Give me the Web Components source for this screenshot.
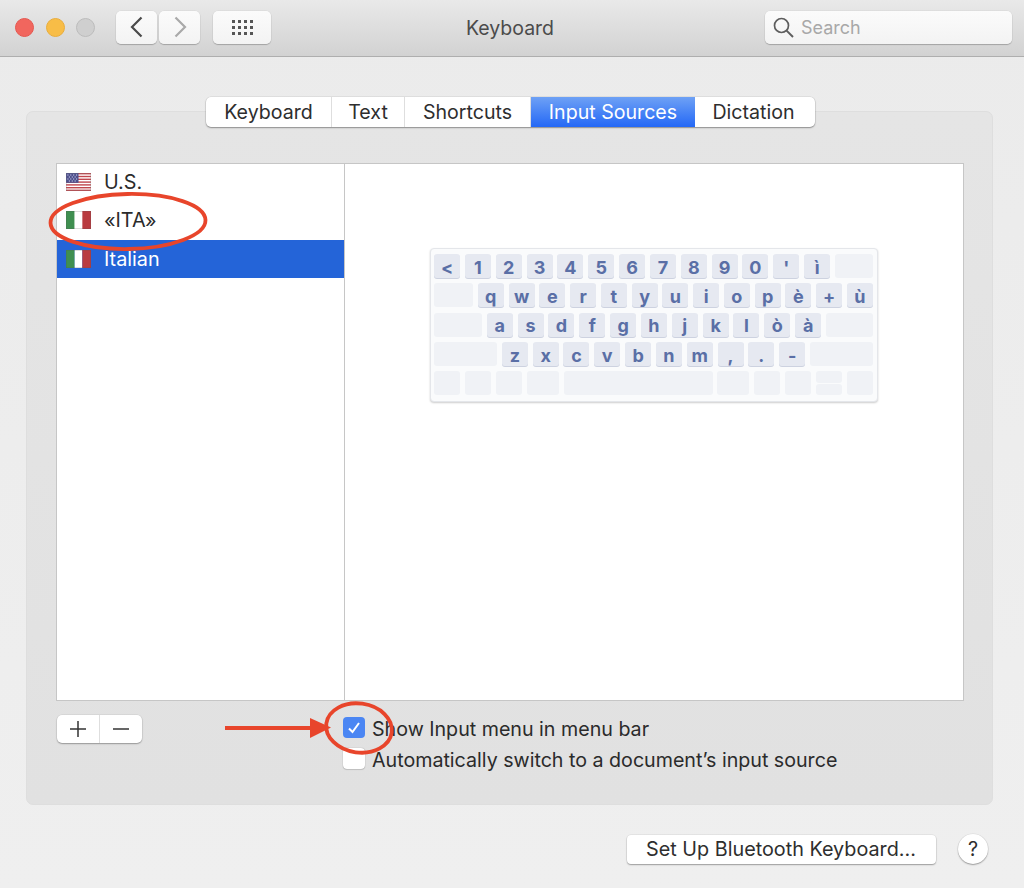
<!DOCTYPE html>
<html lang="en">
<head>
<meta charset="utf-8">
<title>Keyboard</title>
<style>
  html, body { margin: 0; padding: 0; }
  body {
    width: 1024px;
    height: 888px;
    overflow: hidden;
    position: relative;
    background: linear-gradient(#ebebeb, #efefef);
    font-family: Inter, "Liberation Sans", sans-serif;
    color: #2b2b2b;
  }
</style>
</head>
<body>
<mac-titlebar title="Keyboard"></mac-titlebar>

<mac-panel>
  <mac-tabs slot="tabs" active="Input Sources" items="Keyboard:126,Text:73,Shortcuts:126,Input Sources:164,Dictation:120"></mac-tabs>
  <source-pane></source-pane>
  <bottom-controls></bottom-controls>
</mac-panel>

<mac-footer></mac-footer>
<mark-up></mark-up>

<script>
const US_FLAG = `<svg width="25" height="18" viewBox="0 0 26 18" preserveAspectRatio="none">
  <rect width="26" height="18" fill="#fff"/>
  <g fill="#c0474e">
    <rect y="0" width="26" height="1.4"/><rect y="2.8" width="26" height="1.4"/>
    <rect y="5.6" width="26" height="1.4"/><rect y="8.4" width="26" height="1.4"/>
    <rect y="11.2" width="26" height="1.4"/><rect y="14" width="26" height="1.4"/>
    <rect y="16.6" width="26" height="1.4"/>
  </g>
  <rect width="13" height="9.8" fill="#4d4f8c"/>
  <g fill="#b9bbdb">
    <circle cx="2" cy="2" r=".7"/><circle cx="5" cy="2" r=".7"/><circle cx="8" cy="2" r=".7"/><circle cx="11" cy="2" r=".7"/>
    <circle cx="3.5" cy="4" r=".7"/><circle cx="6.5" cy="4" r=".7"/><circle cx="9.5" cy="4" r=".7"/>
    <circle cx="2" cy="6" r=".7"/><circle cx="5" cy="6" r=".7"/><circle cx="8" cy="6" r=".7"/><circle cx="11" cy="6" r=".7"/>
    <circle cx="3.5" cy="8" r=".7"/><circle cx="6.5" cy="8" r=".7"/><circle cx="9.5" cy="8" r=".7"/>
  </g>
  <rect x=".25" y=".25" width="25.5" height="17.5" fill="none" stroke="#777" stroke-opacity=".45" stroke-width=".5"/>
</svg>`;

const IT_FLAG = `<svg width="25" height="18" viewBox="0 0 26 18" preserveAspectRatio="none">
  <rect width="9" height="18" fill="#3f8f50"/>
  <rect x="9" width="8" height="18" fill="#fff"/>
  <rect x="17" width="9" height="18" fill="#b93b40"/>
  <rect x=".25" y=".25" width="25.5" height="17.5" fill="none" stroke="#555" stroke-opacity=".4" stroke-width=".5"/>
</svg>`;

class MacTitlebar extends HTMLElement {
  connectedCallback() {
    const shadow = this.attachShadow({ mode: "open" });
    const dots = Array.from({ length: 12 }, () => "<i></i>").join("");
    shadow.innerHTML = `
      <style>
        :host {
          display: flex;
          align-items: center;
          box-sizing: border-box;
          height: 57px;
          padding: 0 12px 2px 15px;
          background: linear-gradient(#e9e9e9, #d2d2d2);
          border-bottom: 1px solid #aeaeae;
          position: relative;
        }
        .lights { display: flex; gap: 11.5px; margin-right: 21px; }
        .light { width: 19px; height: 19px; border-radius: 50%; box-sizing: border-box; }
        .red { background: #f1665e; border: 1px solid #e5574f; }
        .yellow { background: #f8bd47; border: 1px solid #e9ad3c; }
        .grey { background: #cfcfcf; border: 1px solid #bcbcbc; }
        .btn {
          display: flex;
          align-items: center;
          justify-content: center;
          box-sizing: border-box;
          height: 33px;
          background: linear-gradient(#fbfbfb, #f3f3f3);
          border-radius: 5px;
          box-shadow: 0 1px 1px rgba(0,0,0,.22), 0 0 0 .5px rgba(0,0,0,.06);
        }
        .nav { width: 41px; }
        .nav + .nav { margin-left: 2px; }
        .apps { width: 58px; margin-left: 13px; }
        .grid { display: grid; grid-template-columns: repeat(4, 3px); gap: 3px; }
        .grid i { width: 3px; height: 3px; background: #555; display: block; }
        .title {
          position: absolute;
          left: 0; right: 0; top: 0; bottom: 0;
          display: flex;
          align-items: center;
          justify-content: center;
          font-size: 19.5px;
          color: #4b4b4b;
          pointer-events: none;
          transform: translateX(-2px);
        }
        .search {
          margin-left: auto;
          width: 247px;
          justify-content: flex-start;
          padding-left: 7px;
          gap: 6px;
          position: relative;
          z-index: 1;
          color: #a8a8a8;
          font-size: 18px;
        }
      </style>
      <div class="lights">
        <div class="light red"></div><div class="light yellow"></div><div class="light grey"></div>
      </div>
      <div class="btn nav"><svg width="16" height="24" viewBox="0 0 16 24"><path d="M12.5 2.5 3 12l9.5 9.5" fill="none" stroke="#4a4a4a" stroke-width="2.2"/></svg></div>
      <div class="btn nav"><svg width="16" height="24" viewBox="0 0 16 24"><path d="M3.5 2.5 13 12l-9.5 9.5" fill="none" stroke="#a9a9a9" stroke-width="2.2"/></svg></div>
      <div class="btn apps"><div class="grid">${dots}</div></div>
      <div class="title">${this.getAttribute("title")}</div>
      <div class="btn search">
        <svg width="23" height="23" viewBox="0 0 23 23"><circle cx="9.5" cy="9.5" r="7" fill="none" stroke="#5d5d5d" stroke-width="1.7"/><path d="M14.6 14.6 21 21" stroke="#5d5d5d" stroke-width="2"/></svg>
        <span>Search</span>
      </div>
    `;
  }
}

class MacPanel extends HTMLElement {
  connectedCallback() {
    this.attachShadow({ mode: "open" }).innerHTML = `
      <style>
        :host {
          display: flex;
          flex-direction: column;
          box-sizing: border-box;
          width: 967px;
          height: 694px;
          margin: 54px 0 0 26px;
          padding: 0 29px 0 29px;
          background: linear-gradient(#e5e5e5, #e1e1e1);
          border: 1px solid #dedede;
          border-radius: 7px;
        }
        .tabs { display: flex; justify-content: center; margin: -15px 0 36px; padding-left: 2px; }
      </style>
      <div class="tabs"><slot name="tabs"></slot></div>
      <slot></slot>
    `;
  }
}

class MacTabs extends HTMLElement {
  connectedCallback() {
    const active = this.getAttribute("active");
    const items = this.getAttribute("items").split(",").map(s => s.split(":"));
    const tabs = items.map(([label, w]) =>
      `<div class="tab ${label === active ? "on" : ""}" style="width:${w}px">${label}</div>`).join("");
    this.attachShadow({ mode: "open" }).innerHTML = `
      <style>
        :host {
          display: flex;
          height: 30px;
          border-radius: 5px;
          overflow: hidden;
          background: #fff;
          box-shadow: 0 1px 1.5px rgba(0,0,0,.35), 0 0 0 .5px rgba(0,0,0,.1);
          font-size: 19.6px;
          color: #2e2e2e;
        }
        .tab {
          display: flex;
          align-items: center;
          justify-content: center;
          box-sizing: border-box;
          border-right: 1px solid #dedede;
        }
        .tab:last-child { border-right: 0; padding-right: 3px; }
        .on {
          color: #fff;
          border-right: 0;
          background: linear-gradient(#6ea1f5, #2468f6);
        }
      </style>
      ${tabs}
    `;
  }
}

class SourcePane extends HTMLElement {
  connectedCallback() {
    this.attachShadow({ mode: "open" }).innerHTML = `
      <style>
        :host {
          display: flex;
          box-sizing: border-box;
          width: 908px;
          height: 538px;
          background: #fff;
          border: 1px solid #c6c6c6;
        }
        .list {
          width: 288px;
          box-sizing: border-box;
          flex: none;
          border-right: 1px solid #c6c6c6;
          overflow: hidden;
        }
        .rows { margin-top: -1px; }
        .detail { flex: 1; display: flex; justify-content: center; padding: 84px 0 0 0; }
      </style>
      <div class="list"><div class="rows">
        <source-row label="U.S.">${US_FLAG}</source-row>
        <source-row label="«ITA»">${IT_FLAG}</source-row>
        <source-row label="Italian" selected>${IT_FLAG}</source-row>
      </div></div>
      <div class="detail"><key-board></key-board></div>
    `;
  }
}

class SourceRow extends HTMLElement {
  connectedCallback() {
    const on = this.hasAttribute("selected");
    this.attachShadow({ mode: "open" }).innerHTML = `
      <style>
        :host {
          display: flex;
          align-items: center;
          box-sizing: border-box;
          height: 38.3px;
          padding-left: 9px;
          gap: 13px;
          font-size: 19.8px;
          color: ${on ? "#fff" : "#2b2b2b"};
          background: ${on ? "#2464d8" : "transparent"};
        }
        slot { display: flex; }
      </style>
      <slot></slot><span>${this.getAttribute("label")}</span>
    `;
  }
}

const KEY_ROWS = [
  [..."<1234567890'ì".split("").map(k => [k, 26]), ["", 38]],
  [["", 39], ..."qwertyuiopè+ù".split("").map(k => [k, 26])],
  [["", 48], ..."asdfghjklòà".split("").map(k => [k, 26]), ["", 47]],
  [["", 63], ..."zxcvbnm,.-".split("").map(k => [k, 26]), ["", 63]],
  [["", 26], ["", 26], ["", 26], ["", 32], ["", 149], ["", 32], ["", 26], ["", 26], ["arrows", 26], ["", 26]],
];

class KeyBoard extends HTMLElement {
  connectedCallback() {
    const rows = KEY_ROWS.map(row => `<div class="row">${row.map(([k, w]) => {
      if (k === "arrows") return `<div class="split" style="width:${w}px"><b></b><b></b></div>`;
      return `<div class="${k ? "key" : "blank"}" style="width:${w}px">${k}</div>`;
    }).join("")}</div>`).join("");
    this.attachShadow({ mode: "open" }).innerHTML = `
      <style>
        :host {
          display: flex;
          flex-direction: column;
          gap: 5.35px;
          box-sizing: border-box;
          width: 448px;
          height: 154px;
          padding: 5px 4px 0 3px;
          background: #fafbfc;
          border: 1px solid #e4e6ea;
          border-radius: 4px;
          box-shadow: 0 1px 2px rgba(0,0,0,.2);
        }
        .row { display: flex; justify-content: space-between; height: 24px; }
        .key, .blank, .split b { border-radius: 3px; box-sizing: border-box; }
        .key {
          display: flex;
          align-items: center;
          justify-content: center;
          padding-top: 2px;
          background: #e6e9f1;
          box-shadow: 0 1px 0 #cdd2e0;
          color: #5a6fa6;
          font: 700 18px Inter, "Liberation Sans", sans-serif;
        }
        .blank { background: #f0f2f6; }
        .split { display: flex; flex-direction: column; gap: 1px; }
        .split b { flex: 1; background: #f0f2f6; display: block; }
      </style>
      ${rows}
    `;
  }
}

class MacCheck extends HTMLElement {
  connectedCallback() {
    const on = this.hasAttribute("checked");
    this.attachShadow({ mode: "open" }).innerHTML = `
      <style>
        :host { display: flex; align-items: center; gap: 7px; height: 21px; font-size: 19.65px; color: #2b2b2b; white-space: nowrap; }
        .box {
          width: 22px; height: 21px; flex: none; border-radius: 4px;
          display: flex; align-items: center; justify-content: center;
          background: ${on ? "#4b86f3" : "#fff"};
          box-shadow: ${on ? "none" : "0 0 1px rgba(0,0,0,.4), 0 1px 1px rgba(0,0,0,.12)"};
        }
        span { margin-top: 3px; }
      </style>
      <div class="box">${on ? `<svg width="14" height="13" viewBox="0 0 14 13"><path d="M2 7.5 5.5 11 12 2" fill="none" stroke="#fff" stroke-width="2"/></svg>` : ""}</div>
      <span>${this.getAttribute("label")}</span>
    `;
  }
}

class BottomControls extends HTMLElement {
  connectedCallback() {
    this.attachShadow({ mode: "open" }).innerHTML = `
      <style>
        :host { display: flex; align-items: flex-start; padding: 14px 0 0 1px; }
        .addrem {
          display: flex;
          width: 85px;
          height: 28px;
          margin-right: 201px;
          background: #fff;
          border-radius: 5px;
          box-shadow: 0 1px 1.5px rgba(0,0,0,.3), 0 0 0 .5px rgba(0,0,0,.08);
        }
        .addrem div { flex: 1; display: flex; align-items: center; justify-content: center; }
        .addrem div + div { border-left: 1px solid #dedede; }
        .checks { display: flex; flex-direction: column; gap: 10px; padding-top: 2px; }
      </style>
      <div class="addrem">
        <div><svg width="18" height="18" viewBox="0 0 18 18"><path d="M9 1v16M1 9h16" stroke="#333" stroke-width="1.5"/></svg></div>
        <div><svg width="18" height="18" viewBox="0 0 18 18"><path d="M1 9h16" stroke="#333" stroke-width="1.5"/></svg></div>
      </div>
      <div class="checks">
        <mac-check checked label="Show Input menu in menu bar"></mac-check>
        <mac-check label="Automatically switch to a document’s input source"></mac-check>
      </div>
    `;
  }
}

class MacFooter extends HTMLElement {
  connectedCallback() {
    this.attachShadow({ mode: "open" }).innerHTML = `
      <style>
        :host {
          display: flex;
          align-items: center;
          justify-content: flex-end;
          gap: 22px;
          margin-top: 29px;
          padding-right: 36px;
          font-size: 19.8px;
          color: #2e2e2e;
        }
        .btn {
          width: 309px;
          height: 29px;
          box-sizing: border-box;
          padding-right: 1px;
          display: flex;
          align-items: center;
          justify-content: center;
          background: #fff;
          border-radius: 4px;
          box-shadow: 0 1px 1.5px rgba(0,0,0,.32), 0 0 0 .5px rgba(0,0,0,.08);
        }
        .help {
          width: 30px;
          height: 30px;
          border-radius: 50%;
          display: flex;
          align-items: center;
          justify-content: center;
          background: #fff;
          box-shadow: 0 1px 1.5px rgba(0,0,0,.32), 0 0 0 .5px rgba(0,0,0,.08);
        }
      </style>
      <div class="btn">Set Up Bluetooth Keyboard...</div>
      <div class="help">?</div>
    `;
  }
}

// hand drawn annotations that lie over the window
class MarkUp extends HTMLElement {
  connectedCallback() {
    this.attachShadow({ mode: "open" }).innerHTML = `
      <style>
        :host { position: absolute; left: 0; top: 0; width: 1024px; height: 888px; pointer-events: none; }
        svg { display: block; }
      </style>
      <svg width="1024" height="888" viewBox="0 0 1024 888" fill="none" stroke="#e8452b">
        <ellipse cx="128" cy="221.5" rx="77.5" ry="27.5" stroke-width="3.8" transform="rotate(-1 128 221.5)"/>
        <ellipse cx="359" cy="728" rx="33" ry="24.5" stroke-width="3.8" transform="rotate(8 359 728)"/>
        <path d="M225 728H312" stroke-width="3.8"/>
        <path d="M310 718 331 727.5 310 738Z" fill="#e8452b" stroke="none"/>
      </svg>
    `;
  }
}

customElements.define("mac-titlebar", MacTitlebar);
customElements.define("mac-panel", MacPanel);
customElements.define("mac-tabs", MacTabs);
customElements.define("source-pane", SourcePane);
customElements.define("source-row", SourceRow);
customElements.define("key-board", KeyBoard);
customElements.define("mac-check", MacCheck);
customElements.define("bottom-controls", BottomControls);
customElements.define("mac-footer", MacFooter);
customElements.define("mark-up", MarkUp);
</script>
</body>
</html>
